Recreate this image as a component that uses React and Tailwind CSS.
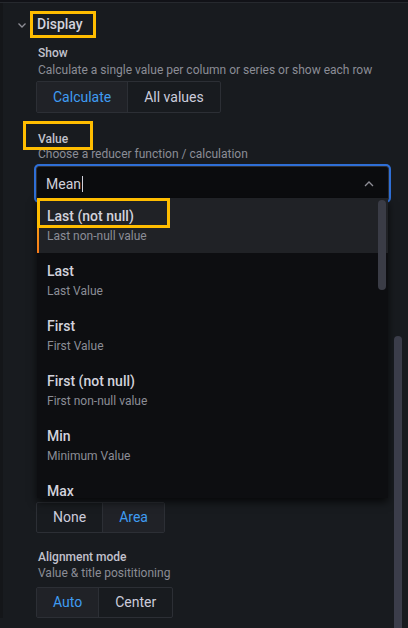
import React from "react";

const Radio = ({ options, selected, h = "h-[31px]" }) => (
  <div className={`flex ${h} w-max rounded-[2px] border border-[#2c2f35]`}>
    {options.map((o, i) => (
      <div
        key={o}
        className={`flex items-center px-[16px] text-[14px] ${
          i > 0 ? "border-l border-[#2c2f35]" : ""
        } ${o === selected ? "bg-[#202227] text-[#3f9cf2]" : "text-[#ccccdc]"}`}
      >
        {o}
      </div>
    ))}
  </div>
);

const Label = ({ children, className = "" }) => (
  <div className={`pl-[2px] text-[12px] leading-[15px] font-medium text-[#c2c2cd] ${className}`}>{children}</div>
);
const Desc = ({ children, className = "" }) => (
  <div className={`pl-[2px] text-[12px] leading-[15px] text-[#8b8d96] ${className}`}>{children}</div>
);

const items = [
  ["Last (not null)", "Last non-null value"],
  ["Last", "Last Value"],
  ["First", "First Value"],
  ["First (not null)", "First non-null value"],
  ["Min", "Minimum Value"],
  ["Max", null],
];

export default function App() {
  return (
    <div
      className="relative w-[408px] h-[628px] overflow-hidden bg-[#181b1f]"
      style={{ fontFamily: "Roboto, 'Liberation Sans', sans-serif" }}
    >
      <div className="h-[2px] bg-[#111217]" />
      <div className="h-px bg-[#26292e]" />
      <div className="flex">
        <div className="w-[3px] self-stretch bg-[#141619]" />
        <div className="flex-1 pl-[33px]">
          {/* Header */}
          <div className="mt-[8px] -ml-[19px] flex h-[27px] items-center">
            <svg width="10" height="8" viewBox="0 0 10 8">
              <path d="M1.5 2.5 L5 6 L8.5 2.5" fill="none" stroke="#8e8e96" strokeWidth="1.3" />
            </svg>
            <div className="ml-[3px] flex h-[27px] w-[66px] items-center border-[3px] border-[#ffbd00] pl-[4px] text-[14px] font-medium text-[#d2d2dc]">
              Display
            </div>
          </div>

          <Label className="mt-[8px]">Show</Label>
          <Desc className="mt-[2px]">Calculate a single value per column or series or show each row</Desc>
          <div className="mt-[3px]">
            <Radio options={["Calculate", "All values"]} selected="Calculate" h="h-[32px]" />
          </div>

          <div className="relative mt-[19px]">
            <div className="absolute -left-[13px] -top-[11px] h-[29px] w-[70px] border-[3px] border-[#ffbd00]" />
            <Label>Value</Label>
          </div>
          <Desc>Choose a reducer function / calculation</Desc>

          <div className="mt-[4px] flex h-[35px] w-[353px] items-center rounded-[3px] border border-[#2c2f35] bg-[#0b0c0e] pl-[9px] pr-[14px] pt-[1px] shadow-[0_0_0_2px_#2f6fd6]">
            <span className="text-[14px] text-[#d0d0da]">Mean</span>
            <span className="ml-[1px] h-[16px] w-px bg-[#d0d0da]" />
            <svg width="10" height="6" viewBox="0 0 10 6" className="ml-auto">
              <path d="M1 5 L5 1 L9 5" fill="none" stroke="#8e8e96" strokeWidth="1.3" />
            </svg>
          </div>

          <div className="h-[301px]" />
          <Radio options={["None", "Area"]} selected="Area" />

          <Label className="mt-[17px]">Alignment mode</Label>
          <Desc className="mt-[1px]">Value &amp; title posititioning</Desc>
          <div className="mt-[6px]">
            <Radio options={["Auto", "Center"]} selected="Auto" />
          </div>
        </div>
      </div>

      {/* Dropdown menu */}
      <div className="absolute left-[37px] top-[198px] h-[300px] w-[351px] overflow-hidden bg-[#0d0e11] shadow-[0_4px_8px_rgba(0,0,0,0.7)]">
        {items.map(([t, d], i) => (
          <div
            key={t}
            className={`relative h-[55px] pl-[10px] pt-[10px] ${i === 0 ? "bg-[#202226]" : ""}`}
          >
            {i === 0 && (
              <>
                <div className="absolute left-0 top-0 h-full w-[2px] bg-gradient-to-b from-[#ffbd00] to-[#f57a1a]" />
                <div className="absolute left-0 top-0 h-[30px] w-[133px] border-[3px] border-[#ffbd00]" />
              </>
            )}
            <div className="text-[14px] leading-[16px] font-medium text-[#d2d2dc]">{t}</div>
            {d && <div className="mt-[5px] text-[12px] leading-[15px] text-[#8b8d96]">{d}</div>}
          </div>
        ))}
        <div className="absolute right-[2px] top-[2px] h-[90px] w-[8px] rounded-full bg-[#3a3c46]" />
      </div>

      {/* Outer scrollbar */}
      <div className="absolute left-[394px] top-[336px] h-[300px] w-[8px] rounded-full bg-[#3b3d4a]" />
    </div>
  );
}
